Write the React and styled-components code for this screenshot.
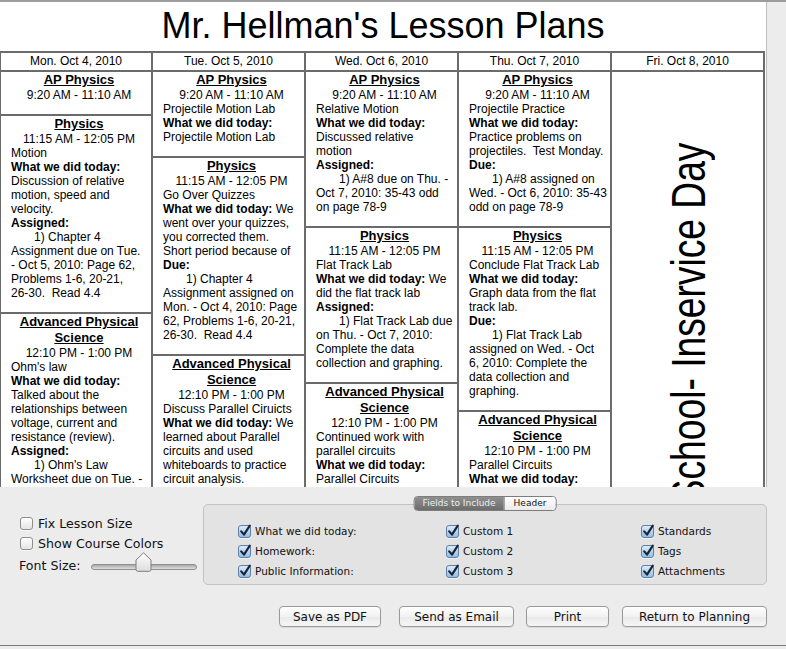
import React from "react";
import styled, { createGlobalStyle } from "styled-components";

const GlobalStyle = createGlobalStyle`
  html, body {
    margin: 0;
    padding: 0;
    background: #ececec;
  }
  #root {
    width: 786px;
    height: 649px;
  }
`;

// line helpers: plain string, bold label (+ trailing text), indented item
const B = (bold, text = "") => ({ bold, text });
const I = text => ({ indent: true, text });

const days = [
	{
		label: "Mon. Oct 4, 2010",
		lessons: [
			{ course: ["AP Physics"], time: "9:20 AM - 11:10 AM", lines: [] },
			{
				course: ["Physics"],
				time: "11:15 AM - 12:05 PM",
				lines: [
					"Motion",
					B("What we did today:"),
					"Discussion of relative",
					"motion, speed and",
					"velocity.",
					B("Assigned:"),
					I("1) Chapter 4"),
					"Assignment due on Tue.",
					"- Oct 5, 2010: Page 62,",
					"Problems 1-6, 20-21,",
					"26-30.  Read 4.4",
				],
			},
			{
				course: ["Advanced Physical", "Science"],
				time: "12:10 PM - 1:00 PM",
				lines: [
					"Ohm's law",
					B("What we did today:"),
					"Talked about the",
					"relationships between",
					"voltage, current and",
					"resistance (review).",
					B("Assigned:"),
					I("1) Ohm's Law"),
					"Worksheet due on Tue. -",
					"Oct 5, 2010: Complete",
					"the worksheet.",
				],
			},
		],
	},
	{
		label: "Tue. Oct 5, 2010",
		lessons: [
			{
				course: ["AP Physics"],
				time: "9:20 AM - 11:10 AM",
				lines: ["Projectile Motion Lab", B("What we did today:"), "Projectile Motion Lab"],
			},
			{
				course: ["Physics"],
				time: "11:15 AM - 12:05 PM",
				lines: [
					"Go Over Quizzes",
					B("What we did today:", " We"),
					"went over your quizzes,",
					"you corrected them.",
					"Short period because of",
					B("Due:"),
					I("1) Chapter 4"),
					"Assignment assigned on",
					"Mon. - Oct 4, 2010: Page",
					"62, Problems 1-6, 20-21,",
					"26-30.  Read 4.4",
				],
			},
			{
				course: ["Advanced Physical", "Science"],
				time: "12:10 PM - 1:00 PM",
				lines: [
					"Discuss Parallel Ciruicts",
					B("What we did today:", " We"),
					"learned about Parallel",
					"circuits and used",
					"whiteboards to practice",
					"circuit analysis.",
				],
			},
		],
	},
	{
		label: "Wed. Oct 6, 2010",
		lessons: [
			{
				course: ["AP Physics"],
				time: "9:20 AM - 11:10 AM",
				lines: [
					"Relative Motion",
					B("What we did today:"),
					"Discussed relative",
					"motion",
					B("Assigned:"),
					I("1) A#8 due on Thu. -"),
					"Oct 7, 2010: 35-43 odd",
					"on page 78-9",
				],
			},
			{
				course: ["Physics"],
				time: "11:15 AM - 12:05 PM",
				lines: [
					"Flat Track Lab",
					B("What we did today:", " We"),
					"did the flat track lab",
					B("Assigned:"),
					I("1) Flat Track Lab due"),
					"on Thu. - Oct 7, 2010:",
					"Complete the data",
					"collection and graphing.",
				],
			},
			{
				course: ["Advanced Physical", "Science"],
				time: "12:10 PM - 1:00 PM",
				lines: [
					"Continued work with",
					"parallel circuits",
					B("What we did today:"),
					"Parallel Circuits",
				],
			},
		],
	},
	{
		label: "Thu. Oct 7, 2010",
		lessons: [
			{
				course: ["AP Physics"],
				time: "9:20 AM - 11:10 AM",
				lines: [
					"Projectile Practice",
					B("What we did today:"),
					"Practice problems on",
					"projectiles.  Test Monday.",
					B("Due:"),
					I("1) A#8 assigned on"),
					"Wed. - Oct 6, 2010: 35-43",
					"odd on page 78-9",
				],
			},
			{
				course: ["Physics"],
				time: "11:15 AM - 12:05 PM",
				lines: [
					"Conclude Flat Track Lab",
					B("What we did today:"),
					"Graph data from the flat",
					"track lab.",
					B("Due:"),
					I("1) Flat Track Lab"),
					"assigned on Wed. - Oct",
					"6, 2010: Complete the",
					"data collection and",
					"graphing.",
				],
			},
			{
				course: ["Advanced Physical", "Science"],
				time: "12:10 PM - 1:00 PM",
				lines: ["Parallel Circuits", B("What we did today:"), "Series and parallel"],
			},
		],
	},
	{ label: "Fri. Oct 8, 2010", off: "School- Inservice Day" },
];

const fieldColumns = [
	["What we did today:", "Homework:", "Public Information:"],
	["Custom 1", "Custom 2", "Custom 3"],
	["Standards", "Tags", "Attachments"],
];

const CheckBox = ({ checked }) => (
	<Box $checked={checked}>
		{checked && (
			<Tick viewBox="0 0 14 14">
				<path d="M3.2 7.4 L6 10.6 L11.8 1.6" />
			</Tick>
		)}
	</Box>
);

const LessonCell = ({ lesson }) => (
	<Lesson>
		<Course>
			{lesson.course.map(c => (
				<div key={c}>
					<u>{c}</u>
				</div>
			))}
		</Course>
		<Time>{lesson.time}</Time>
		{lesson.lines.map((l, i) =>
			typeof l === "string" ? (
				<Line key={i}>{l}</Line>
			) : (
				<Line key={i} $indent={l.indent}>
					{l.bold && <b>{l.bold}</b>}
					{l.text}
				</Line>
			),
		)}
	</Lesson>
);

const App = () => {
	return (
		<>
			<GlobalStyle />
			<Window>
				<View>
					<Title>Mr. Hellman's Lesson Plans</Title>
					<Table>
						{days.map(day => (
							<DayHead key={day.label}>{day.label}</DayHead>
						))}
						{days.map(day => (
							<DayColumn key={day.label}>
								{day.off ? (
									<OffCell>
										<OffText>{day.off}</OffText>
									</OffCell>
								) : (
									day.lessons.map((lesson, idx) => <LessonCell key={idx} lesson={lesson} />)
								)}
							</DayColumn>
						))}
					</Table>
				</View>

				<Panel>
					<TopRow>
						<Options>
							<OptionRow>
								<CheckBox />
								<OptionLabel>Fix Lesson Size</OptionLabel>
							</OptionRow>
							<OptionRow>
								<CheckBox />
								<OptionLabel>Show Course Colors</OptionLabel>
							</OptionRow>
							<FontRow>
								<OptionLabel>Font Size:</OptionLabel>
								<Track>
									<Knob viewBox="0 0 17 20">
										<defs>
											<linearGradient id="knobFill" x1="0" y1="0" x2="0" y2="1">
												<stop offset="0" stopColor="#ffffff" />
												<stop offset="1" stopColor="#dcdcdc" />
											</linearGradient>
										</defs>
										<path
											d="M8.5 0.8 L16 8 V17.5 Q16 19.3 14.3 19.3 H2.7 Q1 19.3 1 17.5 V8 Z"
											fill="url(#knobFill)"
											stroke="#7c7c7c"
											strokeWidth="1"
										/>
									</Knob>
								</Track>
							</FontRow>
						</Options>

						<Group>
							<Tabs>
								<Tab $active>Fields to Include</Tab>
								<Tab>Header</Tab>
							</Tabs>
							<Fields>
								{fieldColumns.map((col, ci) => (
									<FieldColumn key={ci}>
										{col.map(f => (
											<FieldRow key={f}>
												<CheckBox checked />
												<FieldLabel>{f}</FieldLabel>
											</FieldRow>
										))}
									</FieldColumn>
								))}
							</Fields>
						</Group>
					</TopRow>

					<Buttons>
						<Button $w={102} $gap={18}>Save as PDF</Button>
						<Button $w={115} $gap={12}>Send as Email</Button>
						<Button $w={83} $gap={13}>Print</Button>
						<Button $w={145}>Return to Planning</Button>
					</Buttons>
				</Panel>
			</Window>
		</>
	);
};

export default App;

const LINE = "#6b6b6b";

const Window = styled.div`
	width: 786px;
	height: 649px;
	box-sizing: border-box;
	border-top: 2px solid #9c9c9c;
	background: #ececec;
	display: flex;
	flex-direction: column;
	overflow: hidden;
`;

const View = styled.div`
	width: 767px;
	height: 485px;
	flex-shrink: 0;
	box-sizing: border-box;
	border-right: 1px solid #bdbdbd;
	background: #ffffff;
	overflow: hidden;
	font-family: "Liberation Sans", Arial, sans-serif;
	color: #000;
`;

const Title = styled.div`
	height: 49px;
	line-height: 47px;
	font-size: 36px;
	text-align: center;
`;

const Table = styled.div`
	display: grid;
	grid-template-columns: 152px repeat(4, 153px);
	border-left: 1px solid ${LINE};
`;

const DayHead = styled.div`
	height: 21px;
	box-sizing: border-box;
	border-top: 2px solid ${LINE};
	border-bottom: 2px solid ${LINE};
	border-right: 2px solid ${LINE};
	font-size: 12px;
	line-height: 17px;
	text-align: center;
`;

const DayColumn = styled.div`
	display: flex;
	flex-direction: column;
	border-right: 2px solid ${LINE};
	min-height: 420px;
`;

const Lesson = styled.div`
	padding: 0 4px 12px 10px;
	border-bottom: 2px solid ${LINE};
`;

const Course = styled.div`
	font-size: 13px;
	line-height: 16px;
	font-weight: bold;
	text-align: center;
	u {
		text-underline-offset: 1px;
	}
`;

const Time = styled.div`
	font-size: 12px;
	line-height: 14px;
	text-align: center;
`;

const Line = styled.div`
	font-size: 12px;
	line-height: 14px;
	white-space: pre;
	padding-left: ${({ $indent }) => ($indent ? "23px" : "0")};
`;

const OffCell = styled.div`
	display: flex;
	justify-content: center;
	padding: 18px 0 0 2px;
`;

const OffText = styled.div`
	writing-mode: vertical-rl;
	transform: rotate(180deg) scaleY(0.775);
	font-size: 48px;
	line-height: 48px;
	white-space: nowrap;
`;

const Panel = styled.div`
	flex: 1;
	display: flex;
	flex-direction: column;
	padding: 17px 19px 18px 19px;
	margin-bottom: 3px;
	border-bottom: 1px solid #7a7a7a;
	font-family: "DejaVu Sans", "Liberation Sans", sans-serif;
	color: #111;
`;

const TopRow = styled.div`
	display: flex;
	align-items: flex-start;
`;

const Options = styled.div`
	width: 184px;
	flex-shrink: 0;
	margin-top: 9px;
	display: flex;
	flex-direction: column;
`;

const OptionRow = styled.div`
	height: 20px;
	display: flex;
	align-items: center;
	gap: 5px;
	padding-left: 1px;
`;

const OptionLabel = styled.span`
	font-size: 12.6px;
`;

const FontRow = styled.div`
	height: 24px;
	display: flex;
	align-items: center;
	gap: 10px;
`;

const Track = styled.div`
	position: relative;
	width: 104px;
	height: 4px;
	margin-top: 4px;
	border: 1px solid #8f8f8f;
	border-radius: 3px;
	background: linear-gradient(#a9a9a9, #dedede);
`;

const Knob = styled.svg`
	position: absolute;
	left: 43px;
	top: -13px;
	width: 17px;
	height: 20px;
`;

const Group = styled.div`
	position: relative;
	flex: 1;
	height: 81px;
	box-sizing: border-box;
	border: 1px solid #c3c3c3;
	border-radius: 5px;
	background: #e3e3e3;
	padding: 16px 0 3px 34px;
`;

const Tabs = styled.div`
	position: absolute;
	top: -9px;
	left: 50%;
	transform: translateX(-50%);
	display: flex;
	height: 15px;
	border: 1px solid #7d7d7d;
	border-radius: 4px;
	overflow: hidden;
	box-sizing: border-box;
`;

const Tab = styled.div`
	padding: 0 ${({ $active }) => ($active ? "8px" : "9px")};
	font-size: 9px;
	line-height: 13px;
	color: ${({ $active }) => ($active ? "#eeeeee" : "#111")};
	background: ${({ $active }) =>
		$active ? "linear-gradient(#8f8f8f, #6c6c6c)" : "linear-gradient(#ffffff, #ebebeb)"};
	border-left: ${({ $active }) => ($active ? "none" : "1px solid #7d7d7d")};
`;

const Fields = styled.div`
	display: grid;
	grid-template-columns: 208px 195px auto;
`;

const FieldColumn = styled.div`
	display: flex;
	flex-direction: column;
`;

const FieldRow = styled.div`
	height: 20px;
	display: flex;
	align-items: center;
	gap: 4px;
`;

const FieldLabel = styled.span`
	font-size: 10.5px;
`;

const Box = styled.span`
	position: relative;
	flex-shrink: 0;
	width: 13px;
	height: 13px;
	box-sizing: border-box;
	border-radius: 3px;
	border: 1px solid ${({ $checked }) => ($checked ? "#5d7ea6" : "#8f8f8f")};
	background: ${({ $checked }) =>
		$checked ? "linear-gradient(#dcecfb, #8fbfe9)" : "linear-gradient(#ffffff, #e4e4e4)"};
	box-shadow: 0 1px 0 rgba(255, 255, 255, 0.6);
`;

const Tick = styled.svg`
	position: absolute;
	left: -1px;
	top: -2px;
	width: 14px;
	height: 14px;
	overflow: visible;
	path {
		fill: none;
		stroke: #1b2533;
		stroke-width: 2.2;
		stroke-linecap: round;
		stroke-linejoin: round;
	}
`;

const Buttons = styled.div`
	display: flex;
	justify-content: flex-end;
	margin-top: 21px;
`;

const Button = styled.button`
	width: ${({ $w }) => $w}px;
	height: 21px;
	margin-right: ${({ $gap }) => ($gap ? `${$gap}px` : "0")};
	padding: 0;
	border: 1px solid #9a9a9a;
	border-radius: 4px;
	background: linear-gradient(#ffffff, #f1f1f1 50%, #e9e9e9 51%, #f6f6f6);
	font-family: "DejaVu Sans", "Liberation Sans", sans-serif;
	font-size: 12px;
	color: #111;
	box-shadow: 0 1px 1px rgba(0, 0, 0, 0.08);
`;
